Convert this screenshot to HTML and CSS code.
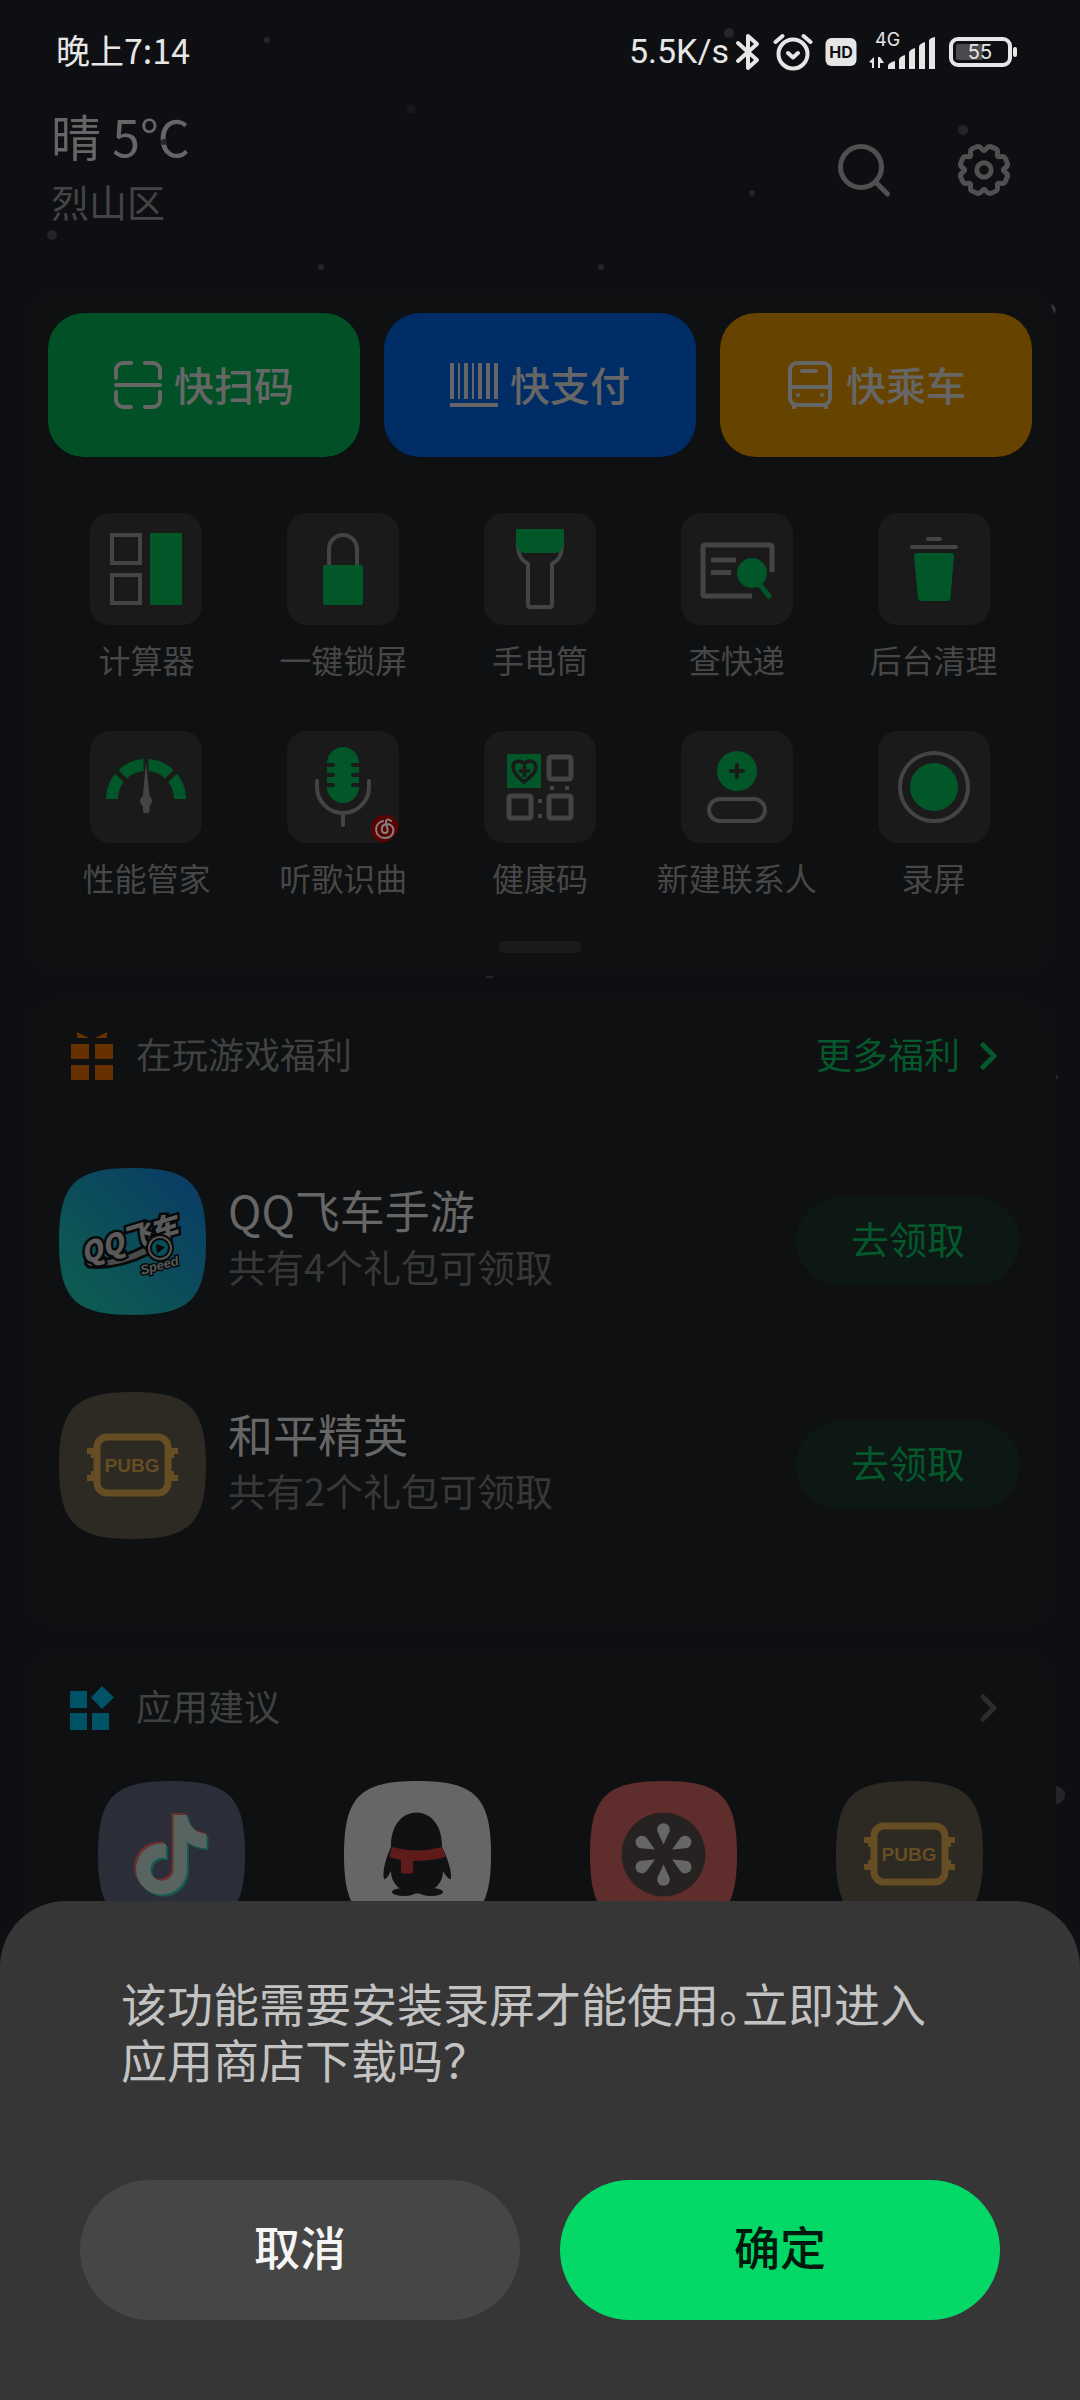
FILE: index.html
```html
<!DOCTYPE html>
<html lang="zh-CN">
<head>
<meta charset="utf-8">
<meta name="viewport" content="width=device-width, initial-scale=1">
<title>快捷中心</title>
<link rel="stylesheet" href="styles.css">
</head>
<body>
<div class="screen">
  <svg class="snow" viewBox="0 0 1080 2400" width="1080" height="2400" aria-hidden="true">
    <g fill="#242528">
      <circle cx="267" cy="40" r="3"/><circle cx="729" cy="33" r="5"/><circle cx="963" cy="130" r="5"/>
      <circle cx="52" cy="235" r="5"/><circle cx="321" cy="267" r="3"/><circle cx="601" cy="267" r="3"/>
      <circle cx="752" cy="193" r="3"/><circle cx="411" cy="109" r="5" fill="#17181b"/>
      <circle cx="164" cy="142" r="3"/>
      <path d="M1051 304q6 2 4 10q-3-4-4-10z" fill="#3a3b3d"/>
      <rect x="486" y="976" width="7" height="2"/><rect x="1056" y="1075" width="2" height="4"/>
      <path d="M1056 1786a9 9 0 0 1 0 18z"/>
    </g>
  </svg>

  <div class="status">
    <span class="status-time">晚上7:14</span>
    <div class="status-right">
      <span class="status-speed">5.5K/s</span>
      <svg class="ic-bt" viewBox="0 0 26 40" width="26" height="40" aria-label="蓝牙"><path d="M3 11L22 28L13 36V4L22 12L3 29" fill="none" stroke="#e6e6e6" stroke-width="4" stroke-linejoin="round" stroke-linecap="round"/></svg>
      <svg class="ic-alarm" viewBox="0 0 40 40" width="40" height="40" aria-label="闹钟"><g fill="none" stroke="#e6e6e6" stroke-width="4" stroke-linecap="round" stroke-linejoin="round"><circle cx="20" cy="22" r="14.500"/><path d="M2.500 10L9.500 4M30.500 4L37.500 10M15 21L20 25.500L25 21"/></g></svg>
      <svg class="ic-hd" viewBox="0 0 32 30" width="32" height="30" aria-label="HD"><rect x="0.500" y="1" width="31" height="28" rx="6" fill="#e6e6e6"/><text x="16" y="21" text-anchor="middle" class="hd-text">HD</text></svg>
      <svg class="ic-signal" viewBox="0 -8 68 54" width="68" height="54" aria-label="4G 信号"><text x="6" y="13" class="net-text">4G</text><g fill="#e6e6e6"><path d="M0 29L5 24V35H3V30zM9 24h2l4 6h-4V35H9zM19 33q0-3 7-5V36H19zM30 27q0-3 6-5V36H30zM40 20q0-3 6-5V36H40zM50 14q0-3 6-5V36H50zM60 8q0-3 6-4V36H60z"/></g></svg>
      <svg class="ic-battery" viewBox="0 0 70 32" width="70" height="32" aria-label="电量 55%"><rect x="2" y="3" width="59" height="26" rx="7" fill="none" stroke="#e6e6e6" stroke-width="4"/><rect x="7" y="8" width="27" height="16" rx="2" fill="#4a4a4c"/><rect x="64" y="11" width="4" height="10" rx="2" fill="#e6e6e6"/><text x="31" y="23" text-anchor="middle" class="bat-text">55</text></svg>
    </div>
  </div>

  <header class="header">
    <div class="weather">
      <div class="weather-now">晴 5℃</div>
      <div class="weather-city">烈山区</div>
    </div>
    <div class="header-actions">
      <button class="icon-btn" aria-label="搜索"><svg viewBox="0 0 56 56" width="56" height="56"><g fill="none" stroke="#4f504f" stroke-width="5" stroke-linecap="round"><circle cx="25" cy="25" r="20.500"/><path d="M40.500 41L51.500 52"/></g></svg></button>
      <button class="icon-btn" aria-label="设置"><svg viewBox="-28 -28 56 56" width="56" height="56"><defs><path id="tooth" d="M0-19.500C2.500-19.500 2.500-24 6-23.500Q9.300-22.500 12.400-20.900C15.200-18.700 12-15.600 13.800-13.800"/></defs><g fill="none" stroke="#4f504f" stroke-width="5" stroke-linecap="round"><use href="#tooth"/><use href="#tooth" transform="rotate(45)"/><use href="#tooth" transform="rotate(90)"/><use href="#tooth" transform="rotate(135)"/><use href="#tooth" transform="rotate(180)"/><use href="#tooth" transform="rotate(225)"/><use href="#tooth" transform="rotate(270)"/><use href="#tooth" transform="rotate(315)"/><circle r="7.200"/></g></svg></button>
    </div>
  </header>

  <main>
    <section class="card">
      <div class="quick">
        <button class="quick-btn quick-scan"><svg viewBox="0 0 48 48" width="48" height="48"><path d="M2 17V9a7 7 0 0 1 7-7H17M31 2h8a7 7 0 0 1 7 7v8M46 31v8a7 7 0 0 1-7 7H31M17 46H9a7 7 0 0 1-7-7V31M2 24H46" fill="none" stroke="#666" stroke-width="4" stroke-linecap="round"/></svg><span>快扫码</span></button>
        <button class="quick-btn quick-pay"><svg viewBox="0 0 48 48" width="48" height="48"><path d="M0 2h4v36h-4zM8 2h2v36h-2zM14 2h4v36h-4zM22 2h2v36h-2zM28 2h4v36h-4zM36 2h4v36h-4zM44 2h4v36h-4zM0 42h48v4h-48z" fill="#666"/></svg><span>快支付</span></button>
        <button class="quick-btn quick-ride"><svg viewBox="0 0 48 48" width="48" height="48"><rect x="4" y="2" width="40" height="42" rx="7" fill="none" stroke="#666" stroke-width="4"/><path d="M4 26H44M16 10H30M8 44v3M40 44v3" fill="none" stroke="#666" stroke-width="4" stroke-linecap="round"/><circle cx="12" cy="34" r="2" fill="#666"/><circle cx="36" cy="34" r="2" fill="#666"/></svg><span>快乘车</span></button>
      </div>

      <div class="tools">
        <button class="tool"><svg class="tile" viewBox="0 0 112 112"><g class="ln"><rect x="22" y="22" width="28" height="28"/><rect x="22" y="62" width="28" height="28"/></g><rect class="gr" x="60" y="20" width="32" height="72" rx="1"/></svg><span>计算器</span></button>
        <button class="tool"><svg class="tile" viewBox="0 0 112 112"><path class="ln" d="M42 54V36a14 14 0 0 1 28 0V54"/><rect class="gr" x="36" y="52" width="40" height="40" rx="2"/></svg><span>一键锁屏</span></button>
        <button class="tool"><svg class="tile" viewBox="0 0 112 112"><path class="ln" d="M34 30C34 44 38 47 44 51V92q0 2 2 2H66q2 0 2-2V51C74 47 78 44 78 30"/><path class="gr" d="M33 16H79q1 0 1 1V30q-1 10-10 10H42q-9 0-10-10V17q0-1 1-1z"/></svg><span>手电筒</span></button>
        <button class="tool"><svg class="tile" viewBox="0 0 112 112"><path class="ln ln5" d="M91 59V34q0-2-2-2H24q-2 0-2 2V81q0 2 2 2H71M30 47H55M30 59.500H50"/><circle class="gr" cx="71" cy="60" r="15"/><path d="M79 72L88 83" fill="none" stroke="#025729" stroke-width="5" stroke-linecap="round"/></svg><span>查快递</span></button>
        <button class="tool"><svg class="tile" viewBox="0 0 112 112"><path class="ln" stroke-linecap="round" d="M50 26H62M34 34H78"/><path class="gr" d="M39 40H73q3 0 3 3L72.500 85q0 3-3 3H43q-3 0-3-3L36 43q0-3 3-3z"/></svg><span>后台清理</span></button>
        <button class="tool"><svg class="tile" viewBox="0 0 112 112"><path d="M22 68A34 34 0 0 1 90 68" fill="none" stroke="#025729" stroke-width="12"/><path d="M24 38L38 52M88 38L74 52M56 28V50" stroke="#1a1a1a" stroke-width="5"/><path d="M56 31L59.500 64V80q0 2-2 2H55q-2 0-2-2V64z" fill="#444"/><circle cx="56" cy="70" r="6" fill="#444"/></svg><span>性能管家</span></button>
        <button class="tool"><svg class="tile" viewBox="0 0 112 112"><rect class="gr" x="40" y="16" width="32" height="56" rx="16"/><path d="M38 34H46M38 44H46M38 54H46M74 34H66M74 44H66M74 54H66" stroke="#1a1a1a" stroke-width="4" stroke-linecap="round"/><path class="ln" stroke-linecap="round" d="M30 50V56a26 26 0 0 0 52 0V50M56 82V94"/><circle cx="98" cy="98" r="14" fill="#5a0202"/><path d="M96 90C86 92 87 107 98 107C109 107 109 92 99 93C93 95 94 102 98 102C104 101 98 94 99 90C100 88 102 88 104 90" fill="none" stroke="#858080" stroke-width="2" stroke-linecap="round"/></svg><span>听歌识曲</span></button>
        <button class="tool"><svg class="tile" viewBox="0 0 112 112"><rect class="gr" x="23" y="23" width="34" height="34" rx="1"/><path d="M40 51C32 45 29 41 29 36C29 30 36 28 40 33C44 28 52 30 52 36C52 41 48 45 40 51zM35 40H46M40.500 35V46" fill="none" stroke="#1a1a1a" stroke-width="3.500"/><g class="ln ln5"><rect x="25" y="65" width="22" height="22" rx="2"/><rect x="65" y="26" width="22" height="22" rx="2"/><rect x="65" y="65" width="22" height="22" rx="2"/></g><path d="M66 55h4v4h-4zM81 55h4v4h-4zM54 68h4v4h-4zM54 83h4v4h-4z" fill="#444"/></svg><span>健康码</span></button>
        <button class="tool"><svg class="tile" viewBox="0 0 112 112"><circle class="gr" cx="56" cy="40" r="20"/><path d="M50 40H62M56 34V46" stroke="#1a1a1a" stroke-width="4" stroke-linecap="round"/><rect class="ln" x="28" y="68" width="56" height="22" rx="11"/></svg><span>新建联系人</span></button>
        <button class="tool"><svg class="tile" viewBox="0 0 112 112"><circle class="ln" cx="56" cy="56" r="34"/><circle class="gr" cx="56" cy="56" r="24"/></svg><span>录屏</span></button>
      </div>
      <div class="grip"></div>
    </section>

    <section class="card card-games">
      <div class="card-head">
        <svg viewBox="0 0 44 48" width="44" height="48"><path d="M1 12h18v15h-18zM25 12h18v15h-18zM1 33h18v15h-18zM25 33h18v15h-18zM7 0L19 6H7zM37 0L25 6H37z" fill="#663000"/></svg>
        <h2>在玩游戏福利</h2>
        <a href="#games" class="more"><span>更多福利</span><svg viewBox="0 0 18 28" width="18" height="28"><path d="M3 3L14 14L3 25" fill="none" stroke="#04582b" stroke-width="5" stroke-linecap="round" stroke-linejoin="round"/></svg></a>
      </div>
      <ul class="games">
        <li class="game">
          <svg class="app-icon" viewBox="0 0 147 147"><defs><linearGradient id="speed" x1="0" y1="1" x2="1" y2="0"><stop offset="0.150" stop-color="#0d5a52"/><stop offset="0.850" stop-color="#0a3f63"/></linearGradient></defs><path d="M73.500 0C131 0 147 16 147 73.500S131 147 73.500 147S0 131 0 73.500S16 0 73.500 0z" fill="url(#speed)"/>
            <path d="M27 92Q55 94 86 78L90 86Q58 102 30 99Q25 97 27 92z" fill="#4a4a4a" stroke="#08090a" stroke-width="3"/>
            <g transform="rotate(-17 73 75)"><text x="71" y="81" text-anchor="middle" class="speed-logo">QQ飞车</text></g>
            <circle cx="101" cy="80" r="11" fill="#0b4d59" stroke="#08090a" stroke-width="6"/><circle cx="101" cy="80" r="11" fill="none" stroke="#555" stroke-width="2"/><path d="M97 76l9 3l-8 7z" fill="#08090a"/>
            <g transform="rotate(-15 100 100)"><text x="101" y="102" text-anchor="middle" class="speed-sub">Speed</text></g></svg>
          <div class="game-text"><h3>QQ飞车手游</h3><p>共有4个礼包可领取</p></div>
          <button class="claim">去领取</button>
        </li>
        <li class="game">
          <svg class="app-icon" viewBox="0 0 147 147"><g id="pubg"><path d="M73.500 0C131 0 147 16 147 73.500S131 147 73.500 147S0 131 0 73.500S16 0 73.500 0z" fill="#2d2923"/><rect x="38" y="45" width="71" height="56" rx="10" fill="none" stroke="#664d23" stroke-width="7"/><path d="M28 56h7v6h-7zM112 56h7v6h-7zM28 83h7v6h-7zM112 83h7v6h-7zM32 60h4v6h-4zM111 60h4v6h-4zM32 79h4v6h-4zM111 79h4v6h-4z" fill="#664d23"/><text x="73" y="80" text-anchor="middle" class="pubg-text">PUBG</text></g></svg>
          <div class="game-text"><h3>和平精英</h3><p>共有2个礼包可领取</p></div>
          <button class="claim">去领取</button>
        </li>
      </ul>
    </section>

    <section class="card card-apps">
      <div class="card-head">
        <svg viewBox="0 0 44 48" width="44" height="48"><path d="M0 7h17v17h-17zM0 29h17v17h-17zM22 29h17v17h-17zM32 2L44 13.500L32 25L21 13.500z" fill="#005266"/></svg>
        <h2>应用建议</h2>
        <a href="#apps" class="more" aria-label="更多应用"><svg viewBox="0 0 18 28" width="18" height="28"><path d="M3 3L14 14L3 25" fill="none" stroke="#2b2c2d" stroke-width="5" stroke-linecap="round" stroke-linejoin="round"/></svg></a>
      </div>
      <div class="apps">
        <a href="#douyin" aria-label="抖音"><svg class="app-icon" viewBox="0 0 147 147"><defs><path id="note" d="M75.500 34H89C90 44 98 53 108.500 53V67C101 67 95 65 89 61V88A25.500 25.500 0 1 1 68 63V77.500A11.500 11.500 0 1 0 75.500 88z"/></defs><path d="M73.500 0C131 0 147 16 147 73.500S131 147 73.500 147S0 131 0 73.500S16 0 73.500 0z" fill="#2b2e38"/><use href="#note" x="-2" y="-2" fill="#6a3030"/><use href="#note" x="2" y="2" fill="#17594f"/><use href="#note" fill="#58645f"/></svg></a>
        <a href="#qq" aria-label="QQ"><svg class="app-icon" viewBox="0 0 147 147"><path d="M73.500 0C131 0 147 16 147 73.500S131 147 73.500 147S0 131 0 73.500S16 0 73.500 0z" fill="#666"/><g fill="#111113"><ellipse cx="60" cy="111" rx="12" ry="4"/><ellipse cx="87" cy="111" rx="12" ry="4"/><path d="M47 66C46 20 99 20 98 66C103 76 108 90 107 98C104 99 101 93 99 90C99 120 47 120 47 90C45 94 42 99 40 98C38 90 42 77 47 66z"/></g><path d="M48 66Q73 73 98 66L102 76Q88 80 69 80V92Q63 93 57 92V79L45 76z" fill="#5f1a1a"/></svg></a>
        <a href="#video" aria-label="视频"><svg class="app-icon" viewBox="0 0 147 147"><defs><path id="drop" d="M0-10L-5.800-22.500A6.300 6.300 0 1 1 5.800-22.500z"/></defs><path d="M73.500 0C131 0 147 16 147 73.500S131 147 73.500 147S0 131 0 73.500S16 0 73.500 0z" fill="#602d2d"/><circle cx="73.500" cy="73.500" r="42" fill="#272222"/><g transform="translate(73.500 73.500)" fill="#666"><use href="#drop"/><use href="#drop" transform="rotate(60)"/><use href="#drop" transform="rotate(120)"/><use href="#drop" transform="rotate(180)"/><use href="#drop" transform="rotate(240)"/><use href="#drop" transform="rotate(300)"/></g></svg></a>
        <a href="#pubg-app" aria-label="和平精英"><svg class="app-icon" viewBox="0 0 147 147"><use href="#pubg"/></svg></a>
      </div>
    </section>
  </main>

  <div class="dialog" role="dialog" aria-modal="true" aria-labelledby="dialog-text">
    <p id="dialog-text">该功能需要安装录屏才能使用。立即进入应用商店下载吗？</p>
    <div class="dialog-actions">
      <button class="btn btn-cancel">取消</button>
      <button class="btn btn-ok">确定</button>
    </div>
  </div>
</div>
</body>
</html>
```

FILE: styles.css
```css
* {
  box-sizing: border-box;
  margin: 0;
  padding: 0;
}

body {
  background: #0e0f12;
  color: #666;
  font-family: "Noto Sans CJK SC", "Noto Sans", sans-serif;
}

button {
  border: 0;
  background: none;
  color: inherit;
  font: inherit;
}

a {
  color: inherit;
  text-decoration: none;
}

svg {
  display: block;
  flex: none;
}

.screen {
  position: relative;
  min-height: 100vh;
  overflow: hidden;
}

.snow {
  position: absolute;
  top: 0;
  left: 0;
}

/* Status bar */
.status {
  display: flex;
  align-items: center;
  justify-content: space-between;
  height: 104px;
  padding: 0 61px 0 56px;
  color: #e6e6e6;
  font-size: 34px;
}

.status-time {
  padding-bottom: 6px;
}

.status-right {
  display: flex;
  align-items: center;
}

.status-speed {
  margin-right: 6px;
  padding-bottom: 2px;
  font-family: Roboto, sans-serif;
}

.ic-bt,
.ic-alarm,
.ic-hd,
.ic-signal {
  margin-right: 12px;
}

.hd-text {
  font: 700 16px Inter, sans-serif;
  fill: #0e0f13;
}

.net-text {
  font: 18px Inter, sans-serif;
  fill: #e6e6e6;
}

.bat-text {
  font: 20px Inter, sans-serif;
  fill: #e6e6e6;
}

/* Weather header */
.header {
  display: flex;
  align-items: center;
  justify-content: space-between;
  padding: 1px 68px 54px 51px;
}

.weather {
  padding-bottom: 8px;
}

.weather-now {
  font-size: 50px;
  line-height: 60px;
}

.weather-city {
  margin-top: 10px;
  color: #444;
  font-size: 38px;
  line-height: 52px;
}

.header-actions {
  display: flex;
  gap: 64px;
}

/* Cards */
.card {
  position: relative;
  margin: 0 24px 24px;
  background: #0e1011;
  border-radius: 36px;
}

.card:first-child {
  padding: 24px 24px 22px;
}

.quick {
  display: grid;
  grid-template-columns: repeat(3, 1fr);
  gap: 24px;
}

.quick-btn {
  display: flex;
  align-items: center;
  justify-content: center;
  gap: 12px;
  height: 144px;
  border-radius: 36px;
  font-size: 40px;
  font-weight: 500;
}

.quick-btn span {
  padding-bottom: 2px;
}

.quick-scan { background: #015026; }
.quick-pay { background: #002d66; }
.quick-ride { background: #664400; }

.tools {
  display: grid;
  grid-template-columns: repeat(5, 1fr);
  row-gap: 50px;
  margin: 56px 0 42px;
}

.tool {
  display: flex;
  flex-direction: column;
  align-items: center;
  gap: 12px;
  color: #474747;
  font-size: 32px;
  line-height: 44px;
}

.tile {
  width: 112px;
  height: 112px;
  border-radius: 20px;
  background: #1a1a1a;
}

.ln {
  fill: none;
  stroke: #444;
  stroke-width: 4;
}

.ln5 { stroke-width: 5; }
.gr { fill: #025729; }

.grip {
  width: 84px;
  height: 12px;
  margin: 0 auto;
  border-radius: 6px;
  background: #1a1a1a;
}

.card-head {
  display: flex;
  align-items: center;
  gap: 22px;
  height: 114px;
  padding: 0 58px 0 46px;
}

.card-head h2 {
  padding-bottom: 6px;
  color: #404141;
  font-size: 36px;
  font-weight: 400;
}

.more {
  display: flex;
  align-items: center;
  gap: 20px;
  margin-left: auto;
  color: #04582b;
  font-size: 36px;
}

.more span {
  padding-bottom: 6px;
}

.card-games {
  padding-bottom: 50px;
}

.games {
  padding: 16px 36px 0 35px;
  list-style: none;
}

.game {
  display: flex;
  align-items: center;
  gap: 22px;
  height: 224px;
}

.app-icon {
  width: 147px;
  height: 147px;
}

.game-text {
  flex: 1;
  padding-bottom: 6px;
  line-height: 56px;
}

.game-text h3 {
  font-size: 45px;
  font-weight: 400;
}

.game-text p {
  color: #383838;
  font-size: 38px;
}

.claim {
  width: 224px;
  height: 88px;
  padding-bottom: 8px;
  border-radius: 44px;
  background: #0d1713;
  color: #04582b;
  font-size: 38px;
}

.speed-logo {
  font: italic 900 28px "Noto Sans CJK SC", sans-serif;
  fill: #5a5a5a;
  stroke: #08090a;
  stroke-width: 5px;
  paint-order: stroke;
}

.speed-sub {
  font: italic 700 13px "Liberation Sans", sans-serif;
  fill: #5a5a5a;
  stroke: #08090a;
  stroke-width: 3px;
  paint-order: stroke;
}

.pubg-text {
  font: 700 19px "Liberation Sans", sans-serif;
  fill: #664d23;
}

.card-apps {
  margin-bottom: 0;
}

.apps {
  display: grid;
  grid-template-columns: repeat(4, 1fr);
  justify-items: center;
  padding: 16px 24px 100px;
}

/* Bottom dialog */
.dialog {
  position: absolute;
  right: 0;
  bottom: 0;
  left: 0;
  padding: 73px 80px 80px;
  border-radius: 66px 66px 0 0;
  background: #363636;
}

.dialog p {
  padding: 0 32px 0 41px;
  color: #c3c3c3;
  font-size: 46px;
  line-height: 56px;
  font-feature-settings: "halt";
}

.dialog-actions {
  display: grid;
  grid-template-columns: 1fr 1fr;
  gap: 40px;
  margin-top: 94px;
}

.btn {
  height: 140px;
  padding-bottom: 10px;
  border-radius: 70px;
  font-size: 46px;
  font-weight: 500;
}

.btn-cancel {
  background: #464646;
  color: #f5f5f5;
}

.btn-ok {
  background: #04d968;
  color: #021a0d;
}
```
